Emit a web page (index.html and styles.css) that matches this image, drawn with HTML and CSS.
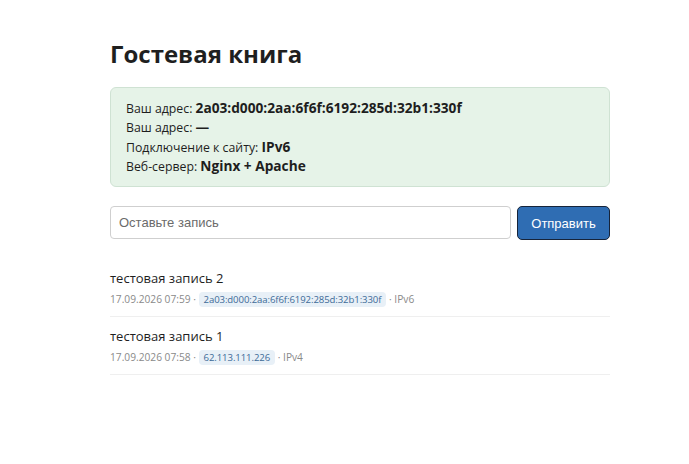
FILE: index.html
```html
<!DOCTYPE html>
<html lang="ru">
<head>
<meta charset="utf-8">
<title>Гостевая книга</title>
<link rel="stylesheet" href="styles.css">
</head>
<body>
<main class="page">
  <h1 class="title">Гостевая книга</h1>
  <section class="info">
    <div class="info-line">Ваш адрес: <b>2a03:d000:2aa:6f6f:6192:285d:32b1:330f</b></div>
    <div class="info-line">Ваш адрес: <b>—</b></div>
    <div class="info-line">Подключение к сайту: <b>IPv6</b></div>
    <div class="info-line">Веб-сервер: <b>Nginx + Apache</b></div>
  </section>
  <form class="form">
    <input class="field" type="text" placeholder="Оставьте запись">
    <button class="send" type="button">Отправить</button>
  </form>
  <ul class="entries">
    <li class="entry">
      <div class="entry-text">тестовая запись 2</div>
      <div class="meta">17.09.2026 07:59 · <span class="chip">2a03:d000:2aa:6f6f:6192:285d:32b1:330f</span> · IPv6</div>
    </li>
    <li class="entry">
      <div class="entry-text">тестовая запись 1</div>
      <div class="meta">17.09.2026 07:58 · <span class="chip">62.113.111.226</span> · IPv4</div>
    </li>
  </ul>
</main>
</body>
</html>
```
FILE: styles.css
```css
html, body { margin: 0; padding: 0; background: #fff; }
body { font-family: "Open Sans", "Noto Sans", sans-serif; color: #1e1e1e; }
.page { width: 500px; padding: 38px 0 0 110px; }
.title { font-size: 24px; font-weight: 700; margin: 0 0 17px; line-height: 32px; color: #1f1f1f; }
.info {
  background: #e6f3e8; border: 1px solid #cfe2d3; border-radius: 6px;
  padding: 11px 15px 10px; font-size: 12.3px; line-height: 19.3px;
}
.info-line { height: 19.3px; }
.info b { font-size: 13.7px; font-weight: 700; line-height: 14px; }
.form { display: flex; gap: 6px; margin-top: 19px; }
.field {
  flex: 1; height: 33px; box-sizing: border-box; border: 1px solid #cfcfcf; border-radius: 4px;
  padding: 0 8px; font-family: "Liberation Sans", Arial, sans-serif; font-size: 13px; color: #333;
}
.field::placeholder { color: #6b6b6b; }
.send {
  width: 93px; height: 34px; box-sizing: border-box; background: #2f6db3; color: #fff;
  border: 1.5px solid #16243a; border-radius: 5px; font-family: "Liberation Sans", Arial, sans-serif; font-size: 13px;
}
.entries { list-style: none; margin: 27px 0 0; padding: 0; }
.entry { border-bottom: 1px solid #efefef; padding: 2px 0 7px; margin-bottom: 8px; }
.entry-text { font-size: 13px; line-height: 19px; color: #1e1e1e; }
.meta { font-size: 10.2px; color: #8a8a8a; line-height: 18px; margin-top: 2px; }
.chip { background: #e8f0f7; color: #3d6b98; border-radius: 4px; padding: 1px 5px; font-size: 9.6px; letter-spacing: -0.1px; }
```
